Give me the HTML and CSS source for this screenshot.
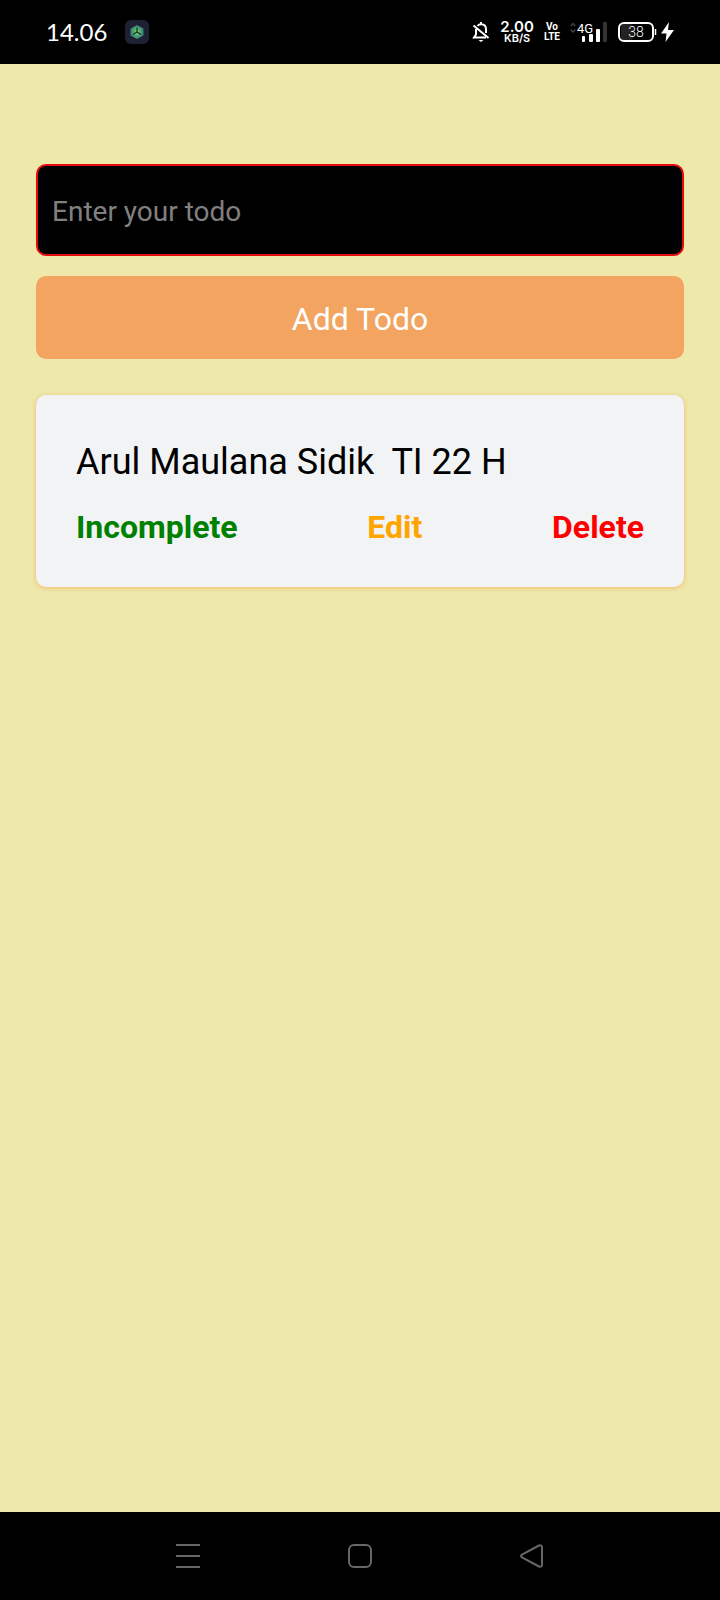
FILE: index.html
```html
<!DOCTYPE html>
<html lang="en">
<head>
<meta charset="utf-8">
<meta name="viewport" content="width=device-width, initial-scale=1">
<title>Todo</title>
<link rel="stylesheet" href="styles.css">
</head>
<body>
<div class="screen">
  <header class="status-bar">
    <div class="status-left">
      <span class="clock">14.06</span>
      <svg class="app-icon" width="24" height="24" viewBox="0 0 24 24" aria-hidden="true">
        <defs>
          <radialGradient id="hex"><stop offset="0" stop-color="#7fd467"/><stop offset="1" stop-color="#327f7b"/></radialGradient>
        </defs>
        <rect width="24" height="24" rx="6" fill="#1e2133"/>
        <path d="M12 5l6.500 3.500v7L12 19l-6.500-3.500v-7z" fill="url(#hex)"/>
        <path d="M12 7.500V12l-4 2.500M12 12l4 2.500" fill="none" stroke="#142b27" stroke-width="1.200"/>
      </svg>
    </div>
    <div class="status-right">
      <svg width="18" height="22" viewBox="0 0 18 22" fill="none" stroke="#fff" stroke-width="2" aria-hidden="true">
        <path d="M5.500 5C6.500 3.700 7.700 3.200 9 3.200c3 0 5 2 5 5V12"/>
        <path d="M4 8v5.500L2 16.500h12"/>
        <path d="M1.500 4.500l15 12.500"/>
        <path d="M9 1v2"/>
        <path d="M6.500 19h5L9 21z" fill="#fff" stroke="none"/>
      </svg>
      <div class="speed"><span class="speed-value">2.00</span><span class="speed-unit">KB/S</span></div>
      <div class="volte"><span>Vo</span><span>LTE</span></div>
      <svg class="signal" width="38" height="22" viewBox="0 0 38 22" aria-hidden="true">
        <path d="M.7 5L3 2.500 5.300 5M.7 8.500L3 11l2.300-2.500" fill="none" stroke="#444" stroke-width="1.300"/>
        <text class="signal-text" x="7" y="12">4G</text>
        <rect x="12" y="15" width="3" height="6" rx="1" fill="#fff"/>
        <rect x="19" y="13" width="4" height="8" rx="1" fill="#fff"/>
        <rect x="26" y="8" width="4" height="13" rx="1" fill="#fff"/>
        <rect x="33" y="1" width="4" height="20" rx="1" fill="#333"/>
      </svg>
      <svg class="battery" width="56" height="22" viewBox="0 0 56 22" aria-hidden="true">
        <rect x="3" y="3" width="12" height="16" rx="3" fill="#222"/>
        <rect x="1" y="2" width="34" height="18" rx="5" fill="none" stroke="#fff" stroke-width="2"/>
        <path d="M37.500 8v6" stroke="#fff" stroke-width="1.500"/>
        <text class="battery-text" x="18" y="16" text-anchor="middle">38</text>
        <path d="M51 1L43 12.500h5.500L47.500 21l8.500-12h-6z" fill="#fff"/>
      </svg>
    </div>
  </header>

  <main class="content">
    <form class="todo-form">
      <input class="todo-input" type="text" placeholder="Enter your todo" aria-label="Enter your todo">
      <button class="add-button" type="button">Add Todo</button>
    </form>
    <article class="todo-card">
      <p class="todo-title">Arul Maulana Sidik&nbsp; TI 22 H</p>
      <div class="todo-actions">
        <button class="action action-status" type="button">Incomplete</button>
        <button class="action action-edit" type="button">Edit</button>
        <button class="action action-delete" type="button">Delete</button>
      </div>
    </article>
  </main>

  <nav class="nav-bar">
    <button class="nav-button" type="button" aria-label="Recent apps">
      <svg width="24" height="24" viewBox="0 0 24 24"><path d="M0 1h24M0 12h24M0 23h24"/></svg>
    </button>
    <button class="nav-button" type="button" aria-label="Home">
      <svg width="24" height="24" viewBox="0 0 24 24"><rect x="1" y="1" width="22" height="22" rx="5"/></svg>
    </button>
    <button class="nav-button" type="button" aria-label="Back">
      <svg width="24" height="24" viewBox="0 0 24 24"><path d="M19 1.500L2 10.500q-2 1.500 0 3L19 22.500q3 .8 3-2v-17q0-2.800-3-2z"/></svg>
    </button>
  </nav>
</div>
</body>
</html>
```
FILE: styles.css
```css
* {
  box-sizing: border-box;
}

body {
  margin: 0;
  font-family: Roboto, "Liberation Sans", sans-serif;
}

button {
  border: 0;
  padding: 0;
  background: none;
  font-family: inherit;
  cursor: pointer;
}

svg {
  display: block;
}

.screen {
  display: flex;
  flex-direction: column;
  min-height: 100vh;
  background: #eee8aa;
}

.status-bar {
  display: flex;
  align-items: center;
  justify-content: space-between;
  height: 64px;
  padding: 0 46px;
  background: #000;
  color: #fff;
}

.status-left {
  display: flex;
  align-items: center;
  gap: 18px;
}

.clock {
  font-family: Lato, sans-serif;
  font-size: 24px;
  line-height: 32px;
}

.status-right {
  display: flex;
  align-items: center;
  gap: 10px;
}

.speed,
.volte {
  display: flex;
  flex-direction: column;
  align-items: center;
}

.speed {
  font-family: Inter, sans-serif;
  font-weight: 600;
}

.speed-value {
  font-size: 15px;
  line-height: 13px;
}

.speed-unit {
  font-size: 11px;
  line-height: 11px;
}

.volte {
  font-family: Roboto, sans-serif;
  font-size: 10px;
  font-weight: 700;
  line-height: 10px;
}

.signal-text {
  fill: #fff;
  font-family: Roboto, sans-serif;
  font-size: 13px;
}

.battery-text {
  fill: #fff;
  font-family: Roboto, sans-serif;
  font-size: 14px;
  font-weight: 300;
}

.content {
  flex: 1;
  padding: 100px 36px 36px;
}

.todo-form {
  display: flex;
  flex-direction: column;
  gap: 20px;
  margin-bottom: 36px;
}

.todo-input {
  width: 100%;
  padding: 30px 14px 26px;
  border: 2px solid #e60c0c;
  border-radius: 10px;
  background: #000;
  color: #fff;
  font-family: inherit;
  font-size: 28px;
  line-height: 32px;
}

.todo-input::placeholder {
  color: #808080;
  opacity: 1;
}

.add-button {
  padding: 24px 20px 21px;
  border-radius: 10px;
  background: #f3a461;
  color: #fff;
  font-size: 32px;
  line-height: 38px;
}

.todo-card {
  padding: 45px 40px 40px;
  border-radius: 10px;
  background: #f1f3f4;
  box-shadow: 0 1px 4px rgba(244, 140, 60, 0.5);
}

.todo-title {
  margin: 0 0 23px;
  color: #000;
  font-size: 36px;
  line-height: 44px;
}

.todo-actions {
  display: flex;
  justify-content: space-between;
}

.action {
  font-size: 32px;
  font-weight: 700;
  line-height: 40px;
}

.action-status {
  color: #008000;
}

.action-edit {
  color: #ffa500;
}

.action-delete {
  color: #f00;
}

.nav-bar {
  display: grid;
  grid-template-columns: repeat(3, 1fr);
  height: 88px;
  padding: 0 102px;
  background: #000;
}

.nav-button {
  display: flex;
  align-items: center;
  justify-content: center;
}

.nav-button svg {
  fill: none;
  stroke: #666;
  stroke-width: 2;
}
```
